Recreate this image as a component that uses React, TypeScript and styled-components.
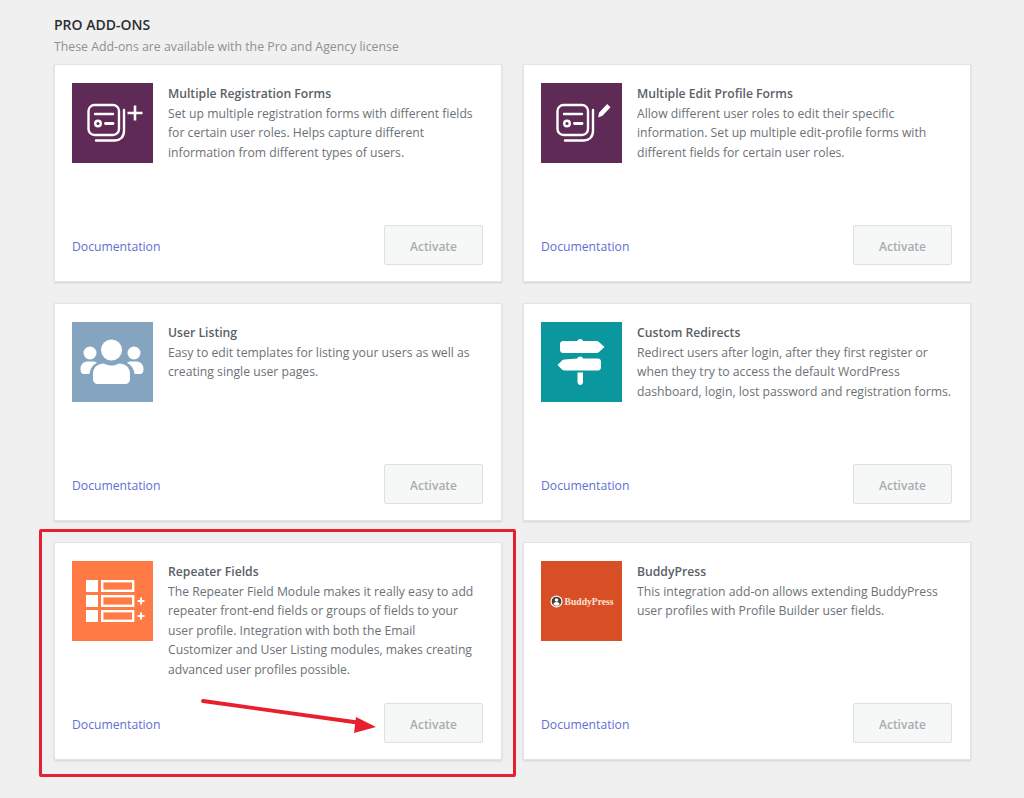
import { ReactNode } from 'react';
import styled, { createGlobalStyle } from 'styled-components';

interface Addon {
  title: string;
  color: string;
  lines: string[];
  icon: ReactNode;
}

const FormStack = () => (
  <g fill="none" stroke="#fff" strokeWidth="2.400" strokeLinecap="round">
    <rect x="16.500" y="22" width="30.500" height="30" rx="6" />
    <path d="M52 27v21c0 6-4 9.500-9 9.500H24" />
    <path d="M23 31h18" />
    <circle cx="26" cy="40.500" r="2.800" />
    <path d="M33.500 40.500h7.500" strokeWidth="2.800" />
  </g>
);

const RegistrationIcon = () => (
  <IconSvg viewBox="0 0 81 81">
    <FormStack />
    <path d="M63 22.500v15M55.500 30h15" fill="none" stroke="#fff" strokeWidth="2.600" />
  </IconSvg>
);

const EditIcon = () => (
  <IconSvg viewBox="0 0 81 81">
    <FormStack />
    <path d="M57 34.500l1.200-5 8-8.500 3.300 3.300-8 8.500z" fill="#fff" />
  </IconSvg>
);

const UsersIcon = () => (
  <IconSvg viewBox="0 0 81 81">
    <g fill="#fff" transform="translate(-0.500 -1)">
      <circle cx="40" cy="29" r="10.500" />
      <circle cx="18.500" cy="32" r="6.500" />
      <circle cx="62.500" cy="32" r="6.500" />
      <path d="M21.500 58v-5c0-7 5-10.500 11-10.500 3 1.500 5 2 7.500 2s4.500-.5 7.500-2c6 0 11 3.500 11 10.500v5c0 3-2 5-5 5h-27c-3 0-5-2-5-5z" />
      <path d="M9 48c0-5 3-7.500 8-7.500h5c1.200 0 2.500.5 3.500 1.500C21 44 18.500 48 18 53h-6c-2 0-3-1.500-3-5z" />
      <path d="M72 48c0-5-3-7.500-8-7.500h-5c-1.200 0-2.500.5-3.500 1.500C60 44 62.500 48 63 53h6c2 0 3-1.500 3-5z" />
    </g>
  </IconSvg>
);

const SignpostIcon = () => (
  <IconSvg viewBox="0 0 81 81">
    <g fill="#fff">
      <path d="M36.500 19c0-2.800 5.500-2.800 5.500 0h13.500c1 0 1.800.3 2.500.9l5.500 5.100-5.500 5.100c-.7.6-1.500.9-2.500.9H22c-2 0-3-1.500-3-3v-6c0-1.500 1-3 3-3z" />
      <path d="M36.500 36.500c0-2.800 5.500-2.800 5.500 0H57c2 0 3 1.500 3 3v6c0 1.500-1 3-3 3H23.500c-1 0-1.800-.3-2.500-.9L16.500 43l4.500-4.600c.7-.6 1.500-.9 2.500-.9z" />
      <path d="M36.500 50.500h5.500V60c0 4-5.500 4-5.500 0z" />
    </g>
  </IconSvg>
);

const RepeaterIcon = () => (
  <IconSvg viewBox="0 0 81 81">
    <g fill="#fff">
      <rect x="14" y="19" width="12" height="12" />
      <rect x="14" y="34" width="12" height="12" />
      <rect x="14" y="49" width="12" height="12" />
    </g>
    <g fill="none" stroke="#fff" strokeWidth="2.400">
      <rect x="30.200" y="20.200" width="31" height="9.600" />
      <rect x="30.200" y="35.200" width="31" height="9.600" />
      <rect x="30.200" y="50.200" width="31" height="9.600" />
      <path d="M65.500 40h7M69 36.500v7M65.500 55h7M69 51.500v7" strokeWidth="1.800" />
    </g>
  </IconSvg>
);

const BuddyPressIcon = () => (
  <BuddyMark>
    <IconSvg viewBox="0 0 15 15" $small>
      <circle cx="7.500" cy="7.500" r="7" fill="#fff" />
      <circle cx="7.500" cy="7.500" r="5.600" fill="#4a3b35" />
      <circle cx="7.500" cy="5.800" r="2.100" fill="#fff" />
      <path d="M3.800 11c.5-2 2-2.800 3.700-2.800s3.200.8 3.700 2.800c-1 1-2.300 1.400-3.700 1.400S4.800 12 3.800 11z" fill="#fff" />
    </IconSvg>
    <BuddyName>BuddyPress</BuddyName>
  </BuddyMark>
);

const addons: Addon[] = [
  {
    title: 'Multiple Registration Forms',
    color: '#5f2a56',
    icon: <RegistrationIcon />,
    lines: [
      'Set up multiple registration forms with different fields',
      'for certain user roles. Helps capture different',
      'information from different types of users.',
    ],
  },
  {
    title: 'Multiple Edit Profile Forms',
    color: '#5f2a56',
    icon: <EditIcon />,
    lines: [
      'Allow different user roles to edit their specific',
      'information. Set up multiple edit-profile forms with',
      'different fields for certain user roles.',
    ],
  },
  {
    title: 'User Listing',
    color: '#84a4c0',
    icon: <UsersIcon />,
    lines: ['Easy to edit templates for listing your users as well as', 'creating single user pages.'],
  },
  {
    title: 'Custom Redirects',
    color: '#0a979e',
    icon: <SignpostIcon />,
    lines: [
      'Redirect users after login, after they first register or',
      'when they try to access the default WordPress',
      'dashboard, login, lost password and registration forms.',
    ],
  },
  {
    title: 'Repeater Fields',
    color: '#ff7a45',
    icon: <RepeaterIcon />,
    lines: [
      'The Repeater Field Module makes it really easy to add',
      'repeater front-end fields or groups of fields to your',
      'user profile. Integration with both the Email',
      'Customizer and User Listing modules, makes creating',
      'advanced user profiles possible.',
    ],
  },
  {
    title: 'BuddyPress',
    color: '#d94f25',
    icon: <BuddyPressIcon />,
    lines: ['This integration add-on allows extending BuddyPress', 'user profiles with Profile Builder user fields.'],
  },
];

const App = () => (
  <Page>
    <GlobalStyle />
    <Heading>PRO ADD-ONS</Heading>
    <Subheading>These Add-ons are available with the Pro and Agency license</Subheading>
    <Grid>
      {addons.map((addon) => (
        <Card key={addon.title}>
          <CardTop>
            <Thumb $color={addon.color}>{addon.icon}</Thumb>
            <CardText>
              <CardTitle>{addon.title}</CardTitle>
              {addon.lines.map((line) => (
                <CardLine key={line}>{line}</CardLine>
              ))}
            </CardText>
          </CardTop>
          <CardFooter>
            <DocLink>Documentation</DocLink>
            <ActivateButton>Activate</ActivateButton>
          </CardFooter>
        </Card>
      ))}
    </Grid>
    <Highlight />
    <Arrow viewBox="0 0 210 50">
      <path d="M2 2 L160 24" stroke="#e8202e" strokeWidth="3.800" strokeLinecap="round" fill="none" />
      <path d="M155 18 L175 28 L153 34 z" fill="#e8202e" />
    </Arrow>
  </Page>
);

const GlobalStyle = createGlobalStyle`
  html, body {
    margin: 0;
    padding: 0;
    background: #f0f0f0;
  }
`;

const Page = styled.div`
  position: relative;
  width: 1024px;
  height: 798px;
  box-sizing: border-box;
  padding: 15px 0 0 54px;
  overflow: hidden;
  font-family: 'Open Sans', sans-serif;
  background: #f0f0f0;
`;

const Heading = styled.div`
  font-size: 14px;
  line-height: 20px;
  font-weight: 600;
  color: #2a2e33;
`;

const Subheading = styled.div`
  margin-top: 3px;
  font-size: 12.300px;
  line-height: 18px;
  color: #8d9195;
`;

const Grid = styled.div`
  display: grid;
  grid-template-columns: 448px 448px;
  grid-auto-rows: 218px;
  gap: 21px;
  margin-top: 8px;
`;

const Card = styled.div`
  display: flex;
  flex-direction: column;
  box-sizing: border-box;
  padding: 18px 18px 16px 17px;
  background: #fff;
  border: 1px solid #e2e4e7;
  box-shadow: 0 1px 2px rgba(0, 0, 0, 0.12);
`;

const CardTop = styled.div`
  display: flex;
  gap: 15px;
`;

const Thumb = styled.div<{ $color: string }>`
  display: flex;
  align-items: center;
  justify-content: center;
  flex: none;
  width: 81px;
  height: 80px;
  background: ${({ $color }) => $color};
`;

const IconSvg = styled.svg<{ $small?: boolean }>`
  display: block;
  flex: none;
  width: ${({ $small }) => ($small ? '13px' : '81px')};
  height: ${({ $small }) => ($small ? '13px' : '81px')};
`;

const BuddyMark = styled.div`
  display: flex;
  align-items: center;
  gap: 2px;
`;

const BuddyName = styled.span`
  font-family: 'Liberation Serif', serif;
  font-size: 9.600px;
  font-weight: 600;
  color: #fbe3d8;
`;

const CardText = styled.div`
  min-width: 0;
  padding-top: 1px;
`;

const CardTitle = styled.div`
  font-size: 12.200px;
  line-height: 19.500px;
  font-weight: 600;
  color: #5a6066;
`;

const CardLine = styled.div`
  font-size: 12.200px;
  line-height: 19.500px;
  color: #6c7176;
  white-space: nowrap;
`;

const CardFooter = styled.div`
  display: flex;
  align-items: center;
  justify-content: space-between;
  margin-top: auto;
`;

const DocLink = styled.span`
  padding-top: 2px;
  font-size: 12.200px;
  color: #5f6fd3;
`;

const ActivateButton = styled.div`
  display: flex;
  align-items: center;
  justify-content: center;
  box-sizing: border-box;
  width: 99px;
  height: 40px;
  padding-top: 2px;
  font-size: 12px;
  font-weight: 600;
  color: #a9acaf;
  background: #f6f7f7;
  border: 1px solid #dfe0e2;
  border-radius: 2px;
`;

const Highlight = styled.div`
  position: absolute;
  left: 39px;
  top: 529px;
  width: 477px;
  height: 248px;
  box-sizing: border-box;
  border: 3.500px solid #e8202e;
  border-radius: 2px;
  pointer-events: none;
`;

const Arrow = styled.svg`
  position: absolute;
  left: 201px;
  top: 699px;
  width: 210px;
  height: 50px;
`;

export default App;
